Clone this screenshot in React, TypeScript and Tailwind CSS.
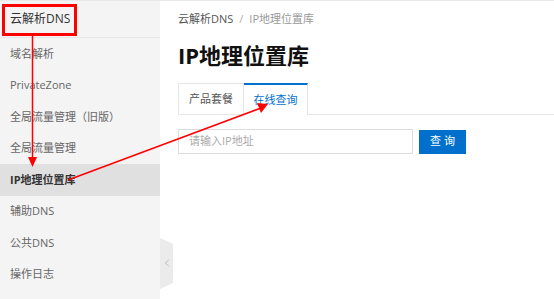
import { ChevronLeft } from "lucide-react";

const menu = [
  "域名解析",
  "PrivateZone",
  "全局流量管理（旧版）",
  "全局流量管理",
  "IP地理位置库",
  "辅助DNS",
  "公共DNS",
  "操作日志",
];

const font = { fontFamily: '"Open Sans", "Noto Sans CJK SC", sans-serif' };

function Sidebar() {
  return (
    <aside className="relative w-[160px] shrink-0 bg-[#f4f4f4]">
      <div className="h-[37px] border-b border-[#e6e6e6] pl-[10px] flex items-center text-[12px] text-[#333]">
        云解析DNS
      </div>
      <ul>
        {menu.map((item) => {
          const active = item === "IP地理位置库";
          return (
            <li
              key={item}
              className={
                active
                  ? "h-[31.5px] pl-[10px] flex items-center text-[11px] font-bold text-[#333] bg-[#e0e0e0]"
                  : "h-[31.5px] pl-[10px] flex items-center text-[11px] text-[#666]"
              }
            >
              {item}
            </li>
          );
        })}
      </ul>
      {/* collapse handle */}
      <div className="absolute left-[160px] top-[237px] w-[13px] h-[51px]">
        <svg width="13" height="51" className="absolute inset-0">
          <polygon points="0,0 13,6 13,45 0,51" fill="#ebebeb" />
        </svg>
        <ChevronLeft
          className="absolute left-[1px] top-[19px] w-[12px] h-[12px] text-[#aaa]"
          strokeWidth={1.5}
        />
      </div>
    </aside>
  );
}

function Main() {
  return (
    <main className="flex-1 bg-white pl-[18px] pt-[10px]">
      <div className="flex items-center gap-[6px] text-[11px] h-[16px]">
        <span className="text-[#555]">云解析DNS</span>
        <span className="text-[#aaa]">/</span>
        <span className="text-[#999]">IP地理位置库</span>
      </div>
      <h1 className="mt-[15px] text-[22px] leading-[26px] font-bold text-[#111]">
        IP地理位置库
      </h1>
      <div className="mt-[15px] flex h-[32px]">
        <div className="w-[66px] border border-[#e6e6e6] flex items-center justify-center text-[11px] text-[#555]">
          产品套餐
        </div>
        <div className="w-[64px] border-t-[2px] border-t-[#0070cc] border-r border-r-[#e6e6e6] flex items-center justify-center text-[11px] text-[#0070cc] bg-white">
          在线查询
        </div>
        <div className="flex-1 border-b border-[#e6e6e6]" />
      </div>
      <div className="mt-[14px] flex items-center gap-[6px]">
        <div className="w-[235px] h-[25px] border border-[#dcdcdc] pl-[10px] flex items-center text-[11px] text-[#aaa]">
          请输入IP地址
        </div>
        <button className="w-[47px] h-[24px] bg-[#0070cc] text-white text-[11px] tracking-[3px] pl-[3px]">
          查询
        </button>
      </div>
    </main>
  );
}

export default function App() {
  return (
    <div
      className="relative w-[554px] h-[299px] overflow-hidden bg-white border-t border-[#e8e8e8] flex"
      style={font}
    >
      <div className="absolute left-0 top-[-1px] w-[35px] h-[2px] bg-[#ff6a00]" />
      <Sidebar />
      <Main />
      {/* annotations */}
      <div className="absolute left-[2px] top-[3px] w-[75px] h-[32px] border-[3px] border-[#ff0000]" />
      <svg
        className="absolute inset-0 pointer-events-none"
        width="554"
        height="299"
      >
        <line x1="32.5" y1="35" x2="32.5" y2="158" stroke="#ff0000" strokeWidth="1.5" />
        <polygon points="28,156 37,156 32.5,166" fill="#ff0000" />
        <line x1="68" y1="179" x2="261" y2="107" stroke="#ff0000" strokeWidth="1.5" />
        <polygon points="268,103 257,102 261,112" fill="#ff0000" />
      </svg>
    </div>
  );
}
